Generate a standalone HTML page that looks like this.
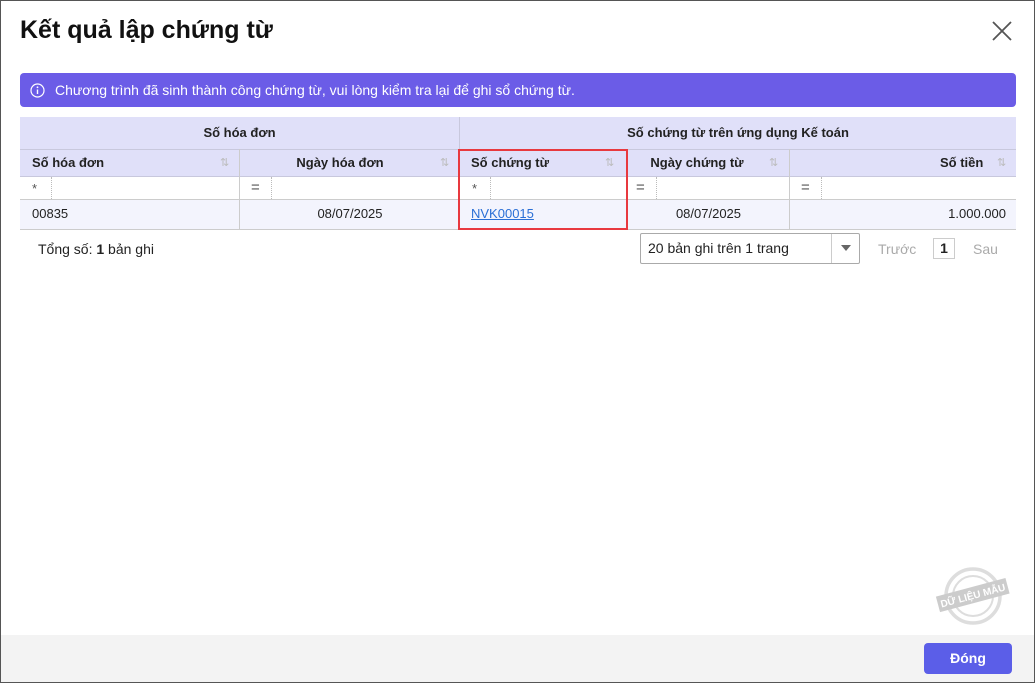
<!DOCTYPE html>
<html><head><meta charset="utf-8"><style>
*{box-sizing:border-box;margin:0;padding:0}
body{width:1035px;height:683px;position:relative;background:#fff;font-family:"Liberation Sans",sans-serif;font-size:13px;color:#222;overflow:hidden;}
.abs{position:absolute}
h1{position:absolute;left:20px;top:16px;font-size:25px;font-weight:bold;color:#111}
.banner{left:20px;top:73px;width:996px;height:34px;background:#6b5ce7;border-radius:4px;color:#fff;font-size:14px;line-height:34px;padding-left:35px}
.hd{background:#e0e0f9;font-weight:bold;color:#222}
.sort{position:absolute;right:8px;color:#bbb;font-size:11px}
</style></head><body>
<h1>Kết quả lập chứng từ</h1>
<svg class="abs" style="left:991px;top:20px" width="22" height="22"><path d="M2 2L20 20M20 2L2 20" stroke="#555" stroke-width="1.8"/></svg>
<div class="abs banner">Chương trình đã sinh thành công chứng từ, vui lòng kiểm tra lại để ghi sổ chứng từ.</div>
<svg class="abs" style="left:30px;top:83px" width="15" height="15"><circle cx="7.5" cy="7.5" r="6.5" fill="none" stroke="#fff" stroke-width="1.2"/><path d="M7.5 6.5v4.5" stroke="#fff" stroke-width="1.4"/><circle cx="7.5" cy="4.3" r=".9" fill="#fff"/></svg>
<div class="abs hd" style="left:20px;top:117px;width:996px;height:59px"></div>
<div class="abs" style="left:20px;top:199px;width:996px;height:30px;background:#f3f4fd"></div>
<div class="abs" style="left:20px;top:149px;width:996px;height:1px;background:#c8c8dd"></div>
<div class="abs" style="left:20px;top:176px;width:996px;height:1px;background:#c8c8dd"></div>
<div class="abs" style="left:20px;top:199px;width:996px;height:1px;background:#ccc"></div>
<div class="abs" style="left:20px;top:229px;width:996px;height:1px;background:#ccc"></div>
<div class="abs" style="left:459px;top:117px;width:1px;height:59px;background:#c8c8dd"></div>
<div class="abs" style="left:239px;top:149px;width:1px;height:80px;background:#ccc"></div>
<div class="abs" style="left:627px;top:149px;width:1px;height:80px;background:#ccc"></div>
<div class="abs" style="left:789px;top:149px;width:1px;height:80px;background:#ccc"></div>
<div class="abs" style="left:51px;top:177px;border-left:1px dotted #bbb;height:22px"></div>
<div class="abs" style="left:271px;top:177px;border-left:1px dotted #bbb;height:22px"></div>
<div class="abs" style="left:490px;top:177px;border-left:1px dotted #bbb;height:22px"></div>
<div class="abs" style="left:656px;top:177px;border-left:1px dotted #bbb;height:22px"></div>
<div class="abs" style="left:821px;top:177px;border-left:1px dotted #bbb;height:22px"></div>
<div class="abs" style="left:20px;top:125px;width:439px;text-align:center;font-weight:bold">Số hóa đơn</div>
<div class="abs" style="left:460px;top:125px;width:556px;text-align:center;font-weight:bold">Số chứng từ trên ứng dụng Kế toán</div>
<div class="abs" style="left:32px;top:155px;font-weight:bold">Số hóa đơn</div><div class="abs sort" style="left:220px;top:156px">⇅</div>
<div class="abs" style="left:240px;top:155px;width:200px;text-align:center;font-weight:bold">Ngày hóa đơn</div><div class="abs sort" style="left:440px;top:156px">⇅</div>
<div class="abs" style="left:471px;top:155px;font-weight:bold">Số chứng từ</div><div class="abs sort" style="left:605px;top:156px">⇅</div>
<div class="abs" style="left:627px;top:155px;width:140px;text-align:center;font-weight:bold">Ngày chứng từ</div><div class="abs sort" style="left:769px;top:156px">⇅</div>
<div class="abs" style="left:940px;top:155px;font-weight:bold">Số tiền</div><div class="abs sort" style="left:997px;top:156px">⇅</div>
<div class="abs" style="left:32px;top:181px;color:#555">*</div>
<div class="abs" style="left:251px;top:179px;color:#555;font-size:15px">=</div>
<div class="abs" style="left:472px;top:181px;color:#555">*</div>
<div class="abs" style="left:636px;top:179px;color:#555;font-size:15px">=</div>
<div class="abs" style="left:801px;top:179px;color:#555;font-size:15px">=</div>
<div class="abs" style="left:32px;top:206px">00835</div>
<div class="abs" style="left:240px;top:206px;width:220px;text-align:center">08/07/2025</div>
<div class="abs" style="left:471px;top:206px;color:#2a6fd6;text-decoration:underline">NVK00015</div>
<div class="abs" style="left:627px;top:206px;width:163px;text-align:center">08/07/2025</div>
<div class="abs" style="left:900px;top:206px;width:106px;text-align:right">1.000.000</div>
<div class="abs" style="left:458px;top:149px;width:170px;height:81px;border:2px solid #e8393f"></div>
<div class="abs" style="left:38px;top:241px;font-size:14px">Tổng số: <b>1</b> bản ghi</div>
<div class="abs" style="left:640px;top:233px;width:220px;height:31px;border:1px solid #aaa;border-radius:2px;font-size:14px;line-height:29px;padding-left:7px">20 bản ghi trên 1 trang</div>
<div class="abs" style="left:831px;top:234px;width:1px;height:29px;background:#ccc"></div>
<div class="abs" style="left:841px;top:245px;border-left:5px solid transparent;border-right:5px solid transparent;border-top:6px solid #666"></div>
<div class="abs" style="left:878px;top:241px;color:#aaa;font-size:14px">Trước</div>
<div class="abs" style="left:933px;top:238px;width:22px;height:21px;border:1px solid #ccc;text-align:center;font-weight:bold;font-size:14px;line-height:19px">1</div>
<div class="abs" style="left:973px;top:241px;color:#aaa;font-size:14px">Sau</div>
<svg class="abs" style="left:935px;top:565px" width="76" height="62"><circle cx="38" cy="31" r="27" fill="none" stroke="#ddd" stroke-width="3.5"/><circle cx="38" cy="31" r="20" fill="none" stroke="#ddd" stroke-width="2"/><g transform="rotate(-15 38 31)"><rect x="2" y="22" width="72" height="16" fill="#ccc"/><text x="38" y="34" text-anchor="middle" font-size="10" font-weight="bold" fill="#fff" font-family="Liberation Sans">DỮ LIỆU MẪU</text></g></svg>
<div class="abs" style="left:0;top:635px;width:1035px;height:48px;background:#f3f3f3"></div>
<div class="abs" style="left:924px;top:643px;width:88px;height:31px;background:#5b5ee8;border-radius:4px;color:#fff;font-weight:bold;font-size:14px;text-align:center;line-height:31px">Đóng</div>
<div class="abs" style="left:0;top:0;width:1035px;height:683px;border:1px solid #555;pointer-events:none"></div>
</body></html>
